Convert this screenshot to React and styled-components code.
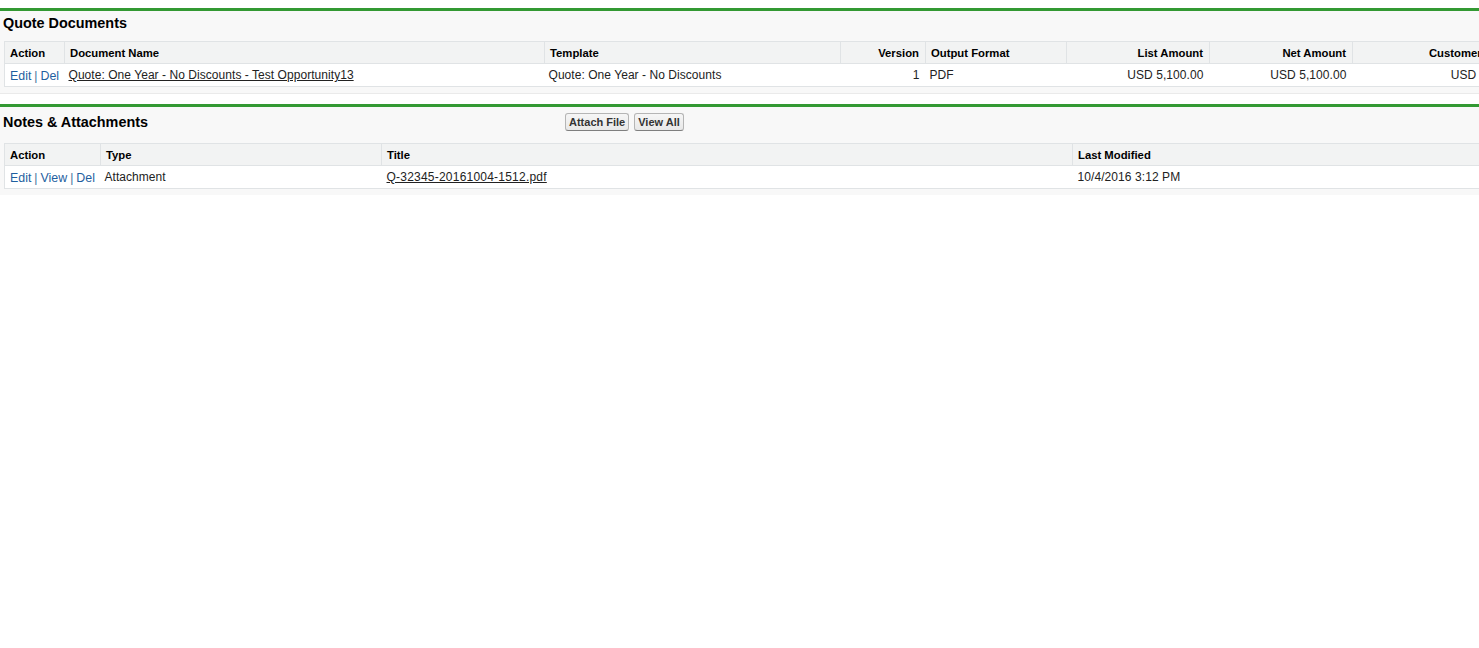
import React from 'react';
import styled, { createGlobalStyle } from 'styled-components';

const Global = createGlobalStyle`
  html, body { margin: 0; padding: 0; background: #fff; overflow: hidden; }
  body { font-family: "Liberation Sans", Arial, sans-serif; font-size: 12px; color: #222; }
`;
const Page = styled.div`
  width: 1479px;
  height: 648px;
  padding-top: 8px;
  box-sizing: border-box;
  overflow: hidden;
`;
const Panel = styled.section`
  background: #f8f8f8;
  border-top: 3px solid #339933;
  border-bottom: ${p => (p.$line ? '1px solid #eaeaea' : 'none')};
  margin-bottom: ${p => p.$gap || 0}px;
  height: ${p => p.$height}px;
  box-sizing: border-box;
  overflow: hidden;
`;
const Header = styled.div`
  display: flex;
  align-items: center;
  height: ${p => p.$height}px;
  padding: 0 0 6px 3px;
  box-sizing: border-box;
`;
const Title = styled.h3`
  margin: 0;
  width: ${p => p.$width}px;
  font-size: 14.4px;
  line-height: 24px;
  font-weight: bold;
  color: #000;
`;
const Button = styled.button`
  font-family: "Liberation Sans", Arial, sans-serif;
  font-size: 11px;
  font-weight: bold;
  color: #333;
  height: 18px;
  padding: 0 3px;
  margin-right: 5px;
  background: linear-gradient(#f6f6f6, #e8e8e8);
  border: 1px solid #b5b5b5;
  border-bottom-color: #7f7f7f;
  border-radius: 3px;
`;
const Table = styled.table`
  margin: 0 0 0 4px;
  table-layout: fixed;
  width: ${p => p.$width}px;
  border-collapse: collapse;
  background: #fff;
  border: 1px solid #e0e3e5;
`;
const Th = styled.th`
  height: 22px;
  padding: 0 6px 0 5px;
  box-sizing: border-box;
  background: #f2f3f3;
  border-bottom: 1px solid #e0e3e5;
  border-left: ${p => (p.$first ? 'none' : '1px solid #e0e3e5')};
  font-size: 11.3px;
  font-weight: bold;
  color: #000;
  text-align: ${p => (p.$right ? 'right' : 'left')};
  white-space: nowrap;
  overflow: hidden;
`;
const Td = styled.td`
  height: 23px;
  padding: ${p => (p.$action ? '2px' : '0')} 6px 0 ${p => (p.$action || p.$numeric ? 5 : 4)}px;
  box-sizing: border-box;
  font-size: 12px;
  letter-spacing: ${p => (p.$numeric ? 0.08 : 0.05)}px;
  color: #222;
  text-align: ${p => (p.$right ? 'right' : 'left')};
  white-space: nowrap;
  overflow: hidden;
`;
const ActionLink = styled.a`
  font-size: 12.4px;
  letter-spacing: 0;
  color: #1f5f9f;
  text-decoration: none;
`;
const Sep = styled.span`
  color: #3f7399;
  margin: 0 3px;
`;
const DocLink = styled.a`
  color: #222;
  letter-spacing: ${p => (p.$file ? 0.22 : 0.05)}px;
  text-decoration: underline;
`;

const quoteCols = [
  ['Action', 60], ['Document Name', 480], ['Template', 296], ['Version', 85, true],
  ['Output Format', 141], ['List Amount', 143, true], ['Net Amount', 143, true], ['Customer Amount', 181, true],
];
const noteCols = [['Action', 96], ['Type', 281], ['Title', 691], ['Last Modified', 461]];

function Head({ cols }) {
  return (
    <>
      <colgroup>{cols.map(c => <col key={c[0]} style={{ width: c[1] }} />)}</colgroup>
      <thead>
        <tr>{cols.map((c, i) => <Th key={c[0]} $first={i === 0} $right={c[2]}>{c[0]}</Th>)}</tr>
      </thead>
    </>
  );
}
function Actions({ items }) {
  return items.map((t, i) => (
    <React.Fragment key={t}>
      {i > 0 && <Sep>|</Sep>}
      <ActionLink href="#">{t}</ActionLink>
    </React.Fragment>
  ));
}

export default function App() {
  return (
    <Page>
      <Global />
      <Panel $height={86} $gap={10} $line>
        <Header $height={30}><Title>Quote Documents</Title></Header>
        <Table $width={1529}>
          <Head cols={quoteCols} />
          <tbody>
            <tr>
              <Td $action><Actions items={['Edit', 'Del']} /></Td>
              <Td><DocLink href="#">Quote: One Year - No Discounts - Test Opportunity13</DocLink></Td>
              <Td>Quote: One Year - No Discounts</Td>
              <Td $right>1</Td>
              <Td>PDF</Td>
              <Td $right $numeric>USD 5,100.00</Td>
              <Td $right $numeric>USD 5,100.00</Td>
              <Td $right $numeric>USD 5,100.00</Td>
            </tr>
          </tbody>
        </Table>
      </Panel>
      <Panel $height={91}>
        <Header $height={36}>
          <Title $width={562}>Notes &amp; Attachments</Title>
          <Button>Attach File</Button>
          <Button>View All</Button>
        </Header>
        <Table $width={1529}>
          <Head cols={noteCols} />
          <tbody>
            <tr>
              <Td $action><Actions items={['Edit', 'View', 'Del']} /></Td>
              <Td>Attachment</Td>
              <Td $numeric><DocLink $file href="#">Q-32345-20161004-1512.pdf</DocLink></Td>
              <Td $numeric>10/4/2016 3:12 PM</Td>
            </tr>
          </tbody>
        </Table>
      </Panel>
    </Page>
  );
}
